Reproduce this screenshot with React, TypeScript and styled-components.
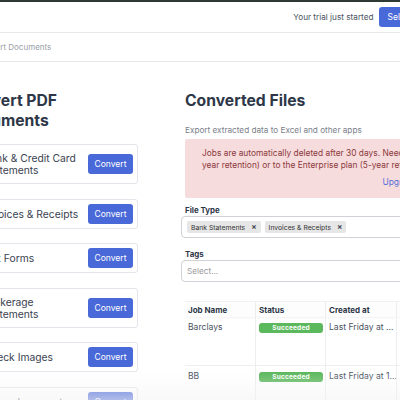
import React from "react";
import styled, { createGlobalStyle } from "styled-components";

const GlobalStyle = createGlobalStyle`
  html, body { margin: 0; padding: 0; background: #ffffff; }
  body { overflow: hidden; font-family: Inter, "Noto Sans", Roboto, sans-serif; color: #2d3748; }
  * { box-sizing: border-box; }
`;

const Viewport = styled.div`
  position: relative;
  width: 400px;
  height: 400px;
  overflow: hidden;
  background: #ffffff;
`;

const Page = styled.div`
  width: 560px;
  margin-left: -80px;
`;

const TopBar = styled.header`
  height: 33px;
  border-top: 2px solid #2f3934;
  border-bottom: 1px solid #e6e8eb;
  display: flex;
  align-items: center;
  justify-content: flex-end;
  gap: 6px;
  padding-right: 40px;
`;

const TrialText = styled.span`
  font-size: 8.2px;
  color: #4a5260;
`;

const PrimaryButton = styled.button`
  border: none;
  background: #4a69d9;
  color: #ffffff;
  font-family: inherit;
  border-radius: 3px;
  cursor: pointer;
  height: 20px;
  font-size: 8.5px;
  padding: 0 8px;
  flex-shrink: 0;
`;

const Crumbs = styled.nav`
  height: 29px;
  border-bottom: 1px solid #e6e8eb;
  display: flex;
  align-items: center;
  padding-left: 56px;
  font-size: 8px;
  color: #9aa0a8;
`;

const Main = styled.main`
  display: flex;
  gap: 47px;
  padding: 29px 0 0 41px;
`;

const LeftCol = styled.section`
  width: 177px;
  flex-shrink: 0;
  display: flex;
  flex-direction: column;
`;

const RightCol = styled.section`
  width: 300px;
  flex-shrink: 0;
  display: flex;
  flex-direction: column;
`;

const Heading = styled.h1`
  margin: 0;
  font-size: 15.7px;
  line-height: 20px;
  font-weight: 700;
  color: #2d3748;
`;

const CardList = styled.div`
  margin-top: 13px;
  display: flex;
  flex-direction: column;
  gap: 14.5px;
`;

const Card = styled.div`
  display: flex;
  align-items: center;
  gap: 4px;
  border: 1px solid #e3e6ea;
  border-radius: 3px;
  padding: 4px 4px 4px 4.6px;
`;

const CardIcon = styled.svg`
  width: 14px;
  height: 14px;
  flex-shrink: 0;
  margin-right: -1px;
  color: #4a69d9;
`;

const CardTitle = styled.span`
  flex: 1;
  font-size: 10.3px;
  line-height: 12px;
  padding: 3px 0;
  color: #3a4252;
`;

const ConvertButton = styled(PrimaryButton)`
  width: 45px;
  padding: 0;
`;

const Subtitle = styled.p`
  margin: 13px 0 0;
  font-size: 8.2px;
  line-height: 12px;
  color: #7a808a;
`;

const Alert = styled.div`
  margin-top: 3px;
  background: #f6dcdd;
  border-radius: 2px;
  padding: 8px 49px 10px 17px;
  font-size: 8.4px;
  line-height: 12px;
  color: #8c3a3c;
  white-space: nowrap;
`;

const AlertLink = styled.div`
  margin-top: 5px;
  text-align: right;
  color: #5670d8;
`;

const FieldLabel = styled.label<{ $mt: number }>`
  display: block;
  margin-top: ${(p) => p.$mt}px;
  font-size: 7.9px;
  line-height: 12px;
  font-weight: 700;
  color: #2d3748;
`;

const SelectBox = styled.div`
  margin-left: -4px;
  height: 22px;
  border: 1px solid #cfd2d6;
  border-radius: 4px;
  display: flex;
  align-items: center;
  background: #ffffff;
`;

const Values = styled.div`
  flex: 1;
  display: flex;
  align-items: center;
  gap: 4px;
  padding: 0 5px;
`;

const Chip = styled.span`
  display: inline-flex;
  align-items: center;
  height: 12px;
  background: #e6e6e6;
  border-radius: 2px;
  font-size: 6.8px;
  color: #333333;
`;

const ChipLabel = styled.span`
  padding: 0 4px 0 4px;
`;

const ChipRemove = styled.span`
  padding: 0 4px 0 2px;
  font-size: 8px;
  font-weight: 700;
  color: #444a55;
`;

const Placeholder = styled.span`
  font-size: 8.2px;
  color: #9a9a9a;
`;

const Indicators = styled.div`
  display: flex;
  align-items: center;
  height: 100%;
`;

const ClearIcon = styled.span`
  font-size: 11px;
  color: #b8b8b8;
  padding: 0 4px 0 6px;
`;

const Separator = styled.span`
  width: 1px;
  height: 12px;
  background: #d6d6d6;
`;

const Chevron = styled.span`
  font-size: 9px;
  color: #c4c4c4;
  padding: 0 16px 0 6px;
`;

const Table = styled.div`
  margin-top: 19px;
  display: grid;
  grid-template-columns: 71px 70px 71px 90px;
`;

const HeadCell = styled.div`
  height: 16px;
  display: flex;
  align-items: center;
  padding: 0 3px;
  font-size: 8px;
  font-weight: 700;
  color: #2d3748;
  border-top: 1px solid #f0f1f3;
  border-right: 1px solid #eceef0;
  box-shadow: 0 2px 2px -1px rgba(0, 0, 0, 0.06);
  background: #fdfdfd;
`;

const Cell = styled.div`
  height: 49px;
  padding: 3px 3px 0;
  font-size: 8.6px;
  line-height: 14px;
  color: #4a5260;
  border-right: 1px solid #eceef0;
  border-bottom: 1px solid #eceef0;
  white-space: nowrap;
  overflow: hidden;
`;

const Badge = styled.span`
  display: flex;
  align-items: center;
  justify-content: center;
  width: 64px;
  height: 10px;
  margin-top: 3px;
  background: #5cb85c;
  border-radius: 3px;
  color: #ffffff;
  font-size: 6.5px;
  font-weight: 700;
  letter-spacing: 0.2px;
`;

const BottomFade = styled.div`
  position: absolute;
  left: 0;
  right: 0;
  bottom: 0;
  height: 28px;
  background: linear-gradient(to bottom, rgba(248, 248, 248, 0), rgba(244, 244, 244, 0.6));
  pointer-events: none;
`;

const DocIcon = () => (
  <CardIcon viewBox="0 0 24 24" fill="none" stroke="currentColor" strokeWidth={2}>
    <path d="M14 2H6a2 2 0 0 0-2 2v16a2 2 0 0 0 2 2h12a2 2 0 0 0 2-2V8z" />
    <path d="M14 2v6h6" />
  </CardIcon>
);

const docTypes = [
  "Bank & Credit Card Statements",
  "Invoices & Receipts",
  "Tax Forms",
  "Brokerage Statements",
  "Check Images",
  "Other documents",
];

const jobs = [
  { name: "Barclays", status: "Succeeded", created: "Last Friday at ...", pages: "12" },
  { name: "BB", status: "Succeeded", created: "Last Friday at 1...", pages: "10" },
];

export default function App() {
  return (
    <>
      <GlobalStyle />
      <Viewport>
        <Page>
          <TopBar>
            <TrialText>Your trial just started</TrialText>
            <PrimaryButton>Select plan</PrimaryButton>
          </TopBar>
          <Crumbs>Convert Documents</Crumbs>
          <Main>
            <LeftCol>
              <Heading>Convert PDF<br />Documents</Heading>
              <CardList>
                {docTypes.map((t) => (
                  <Card key={t}>
                    <DocIcon />
                    <CardTitle>{t}</CardTitle>
                    <ConvertButton>Convert</ConvertButton>
                  </Card>
                ))}
              </CardList>
            </LeftCol>
            <RightCol>
              <Heading>Converted Files</Heading>
              <Subtitle>Export extracted data to Excel and other apps</Subtitle>
              <Alert>
                Jobs are automatically deleted after 30 days. Need more time? Upgrade to the Pro plan (1-
                <br />
                year retention) or to the Enterprise plan (5-year retention).
                <AlertLink>Upgrade plan</AlertLink>
              </Alert>
              <FieldLabel $mt={6}>File Type</FieldLabel>
              <SelectBox>
                <Values>
                  <Chip>
                    <ChipLabel>Bank Statements</ChipLabel>
                    <ChipRemove>×</ChipRemove>
                  </Chip>
                  <Chip>
                    <ChipLabel>Invoices &amp; Receipts</ChipLabel>
                    <ChipRemove>×</ChipRemove>
                  </Chip>
                </Values>
                <Indicators>
                  <ClearIcon>×</ClearIcon>
                  <Separator />
                  <Chevron>▾</Chevron>
                </Indicators>
              </SelectBox>
              <FieldLabel $mt={10}>Tags</FieldLabel>
              <SelectBox>
                <Values>
                  <Placeholder>Select...</Placeholder>
                </Values>
                <Indicators>
                  <Separator />
                  <Chevron>▾</Chevron>
                </Indicators>
              </SelectBox>
              <Table>
                <HeadCell>Job Name</HeadCell>
                <HeadCell>Status</HeadCell>
                <HeadCell>Created at</HeadCell>
                <HeadCell>Pages</HeadCell>
                {jobs.map((j) => (
                  <React.Fragment key={j.name}>
                    <Cell>{j.name}</Cell>
                    <Cell>
                      <Badge>{j.status}</Badge>
                    </Cell>
                    <Cell>{j.created}</Cell>
                    <Cell>{j.pages}</Cell>
                  </React.Fragment>
                ))}
              </Table>
            </RightCol>
          </Main>
        </Page>
        <BottomFade />
      </Viewport>
    </>
  );
}
